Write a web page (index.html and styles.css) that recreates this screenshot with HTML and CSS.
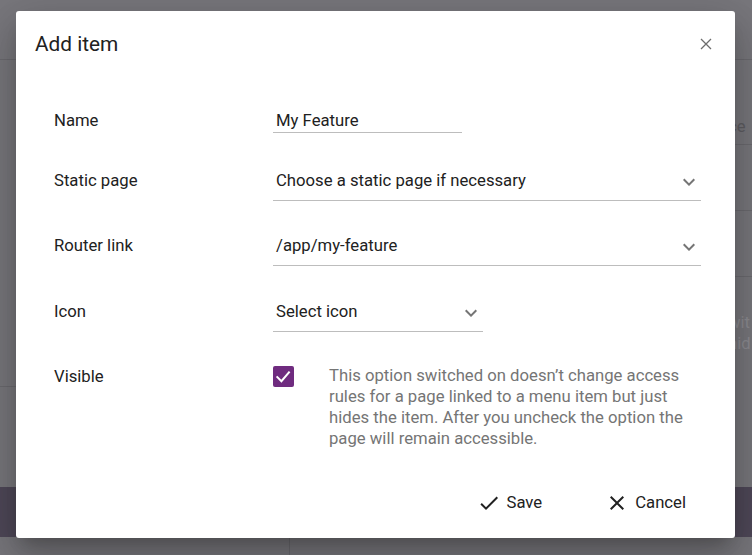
FILE: index.html
```html
<!DOCTYPE html>
<html>
<head>
<meta charset="utf-8">
<title>Add item</title>
<link rel="stylesheet" href="styles.css">
</head>
<body>
<div class="page">
  <div class="page-header"></div>
  <div class="page-main">
    <div class="page-left">
      <div class="left-line"></div>
    </div>
    <div class="page-right">
      <div class="ghost-text ghost-first">ce</div>
      <div class="ghost-line"></div>
      <div class="ghost-select"><span class="ghost-chev"></span></div>
      <div class="ghost-select"><span class="ghost-chev"></span></div>
      <div class="ghost-desc">wit<br>hid</div>
    </div>
  </div>
  <div class="page-band"></div>
  <div class="page-bottom">
    <div class="bottom-left"></div>
    <div class="bottom-right"></div>
  </div>
</div>

<div class="dialog" role="dialog">
  <div class="dlg-header">
    <h2 class="dlg-title">Add item</h2>
    <button class="dlg-close" aria-label="Close">
      <svg width="12" height="12" viewBox="0 0 12 12"><path d="M1 1L11 11M11 1L1 11" stroke="#6d6d6d" stroke-width="1.3" fill="none"/></svg>
    </button>
  </div>
  <div class="dlg-body">
    <div class="row row-name">
      <div class="label">Name</div>
      <div class="field text-field">My Feature</div>
    </div>
    <div class="row">
      <div class="label">Static page</div>
      <div class="field select">
        <span>Choose a static page if necessary</span>
        <svg class="chev" width="24" height="24" viewBox="0 0 24 24"><path d="M16.59 8.59L12 13.17 7.41 8.59 6 10l6 6 6-6z" fill="#757575"/></svg>
      </div>
    </div>
    <div class="row">
      <div class="label">Router link</div>
      <div class="field select">
        <span>/app/my-feature</span>
        <svg class="chev" width="24" height="24" viewBox="0 0 24 24"><path d="M16.59 8.59L12 13.17 7.41 8.59 6 10l6 6 6-6z" fill="#757575"/></svg>
      </div>
    </div>
    <div class="row row-icon">
      <div class="label">Icon</div>
      <div class="field select select-short">
        <span>Select icon</span>
        <svg class="chev" width="24" height="24" viewBox="0 0 24 24"><path d="M16.59 8.59L12 13.17 7.41 8.59 6 10l6 6 6-6z" fill="#757575"/></svg>
      </div>
    </div>
    <div class="row">
      <div class="label">Visible</div>
      <div class="field check-field">
        <span class="checkbox">
          <svg width="20" height="20" viewBox="0 0 20 20"><path d="M3.6 10.4L8.4 15.2 16.6 5.6" stroke="#fff" stroke-width="2" fill="none"/></svg>
        </span>
        <p class="desc">This option switched on doesn’t change access rules for a page linked to a menu item but just hides the item. After you uncheck the option the page will remain accessible.</p>
      </div>
    </div>
  </div>
  <div class="dlg-footer">
    <button class="btn">
      <svg width="24" height="24" viewBox="0 0 24 24"><path d="M9 16.17L4.83 12l-1.42 1.41L9 19 21 7l-1.41-1.41z" fill="#212121"/></svg>
      <span>Save</span>
    </button>
    <button class="btn">
      <svg width="24" height="24" viewBox="0 0 24 24"><path d="M19 6.41L17.59 5 12 10.59 6.41 5 5 6.41 10.59 12 5 17.59 6.41 19 12 13.41 17.59 19 19 17.59 13.41 12z" fill="#212121"/></svg>
      <span>Cancel</span>
    </button>
  </div>
</div>
</body>
</html>
```

FILE: styles.css
```css
* { box-sizing: border-box; }

html, body {
  margin: 0;
  padding: 0;
  width: 752px;
  height: 555px;
  overflow: hidden;
}

body {
  font-family: Roboto, "Liberation Sans", Arial, sans-serif;
  background: #78777c;
  position: relative;
}

/* background page (dimmed) */
.page {
  display: flex;
  flex-direction: column;
  height: 555px;
}
.page-header {
  height: 60px;
  border-bottom: 1px solid #6b6a6f;
  flex: none;
}
.page-main {
  height: 427px;
  display: flex;
  flex: none;
}
.page-left {
  flex: 1;
  padding-top: 326px;
}
.left-line {
  width: 20px;
  border-top: 1px solid #6b6a6f;
}
.page-right {
  width: 60px;
  padding-left: 36px;
  overflow: hidden;
  color: #5e5d62;
  font-size: 16.7px;
}
.ghost-first {
  margin-top: 55px;
  line-height: 24px;
}
.ghost-line {
  margin-top: 5px;
  border-top: 1px solid #6b6a6f;
  width: 40px;
}
.ghost-select {
  height: 66px;
  border-bottom: 1px solid #6b6a6f;
  width: 40px;
  position: relative;
}
.ghost-chev {
  position: absolute;
  left: -5px;
  top: 44px;
  width: 7px;
  height: 7px;
  border-right: 1.5px solid #67666b;
  border-bottom: 1.5px solid #67666b;
  transform: rotate(45deg);
}
.ghost-desc {
  margin-top: 35px;
  line-height: 21px;
  color: #8c8b90;
  white-space: nowrap;
}
.page-band {
  height: 50px;
  background: #4f4858;
  flex: none;
}
.page-bottom {
  flex: 1;
  display: flex;
}
.bottom-left {
  width: 290px;
  border-right: 1px solid #6b6a6f;
}
.bottom-right { flex: 1; }

/* dialog */
.dialog {
  position: absolute;
  left: 16px;
  top: 11px;
  width: 719px;
  height: 527px;
  background: #fff;
  border-radius: 3px;
  box-shadow: 0 11px 15px -7px rgba(0,0,0,.2), 0 24px 38px 3px rgba(0,0,0,.14), 0 9px 46px 8px rgba(0,0,0,.12);
  display: flex;
  flex-direction: column;
  color: #212121;
}
.dlg-header {
  display: flex;
  align-items: center;
  padding: 21px 23px 0 19px;
}
.dlg-title {
  margin: 0;
  font-size: 20.8px;
  line-height: 24px;
  font-weight: 400;
  color: #212121;
}
.dlg-close {
  margin-left: auto;
  border: none;
  background: none;
  padding: 0;
  width: 12px;
  height: 12px;
  display: flex;
}

.dlg-body {
  padding: 52px 34px 0 38px;
  display: flex;
  flex-direction: column;
  gap: 32px;
  font-size: 16.7px;
}
.row {
  display: grid;
  grid-template-columns: 219px 1fr;
  align-items: start;
}
.row-name { margin-bottom: 3px; }
.row-icon { margin-top: 1px; }
.label {
  line-height: 24px;
  padding-top: 1px;
  color: #212121;
}
.field {
  line-height: 24px;
  color: #212121;
}
.text-field {
  width: 189px;
  padding-left: 3px;
  padding-top: 1px;
  line-height: 23px;
  border-bottom: 1px solid #bdbdbd;
}
.select {
  display: flex;
  justify-content: space-between;
  align-items: flex-start;
  padding: 1px 0 7px 3px;
  border-bottom: 1px solid #bdbdbd;
}
.select-short { width: 210px; }
.chev {
  display: block;
  margin: 1px 0 -1px;
  flex: none;
}
.check-field {
  display: flex;
  align-items: flex-start;
}
.checkbox {
  width: 21px;
  height: 21px;
  margin-top: 2px;
  border-radius: 2px;
  background: #6f2b7f;
  display: flex;
  flex: none;
}
.desc {
  margin: 0 0 0 35px;
  padding-top: 1px;
  width: 372px;
  line-height: 21px;
  color: #757575;
}

.dlg-footer {
  margin-top: auto;
  display: flex;
  justify-content: flex-end;
  gap: 31px;
  padding: 0 33px 23px 0;
}
.btn {
  display: inline-flex;
  align-items: center;
  gap: 6px;
  padding: 0 16px;
  border: none;
  background: none;
  font-family: Roboto, "Liberation Sans", Arial, sans-serif;
  font-size: 16.7px;
  line-height: 24px;
  color: #212121;
}
.btn svg { display: block; }
```
